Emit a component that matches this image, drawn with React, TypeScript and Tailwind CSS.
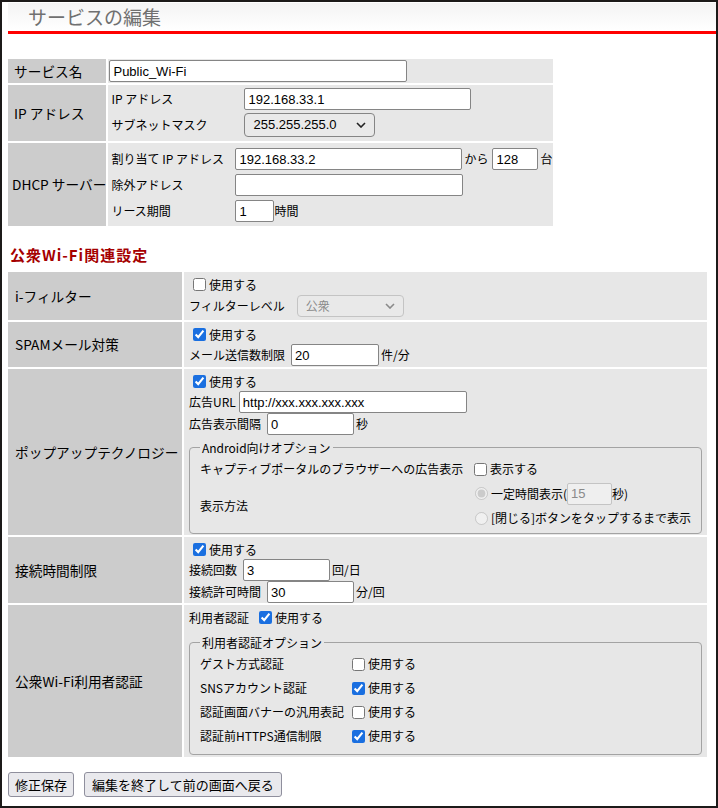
import React from "react";

function TextInput({ value, width, disabled }: { value?: string; width: string; disabled?: boolean }) {
  return (
    <input
      type="text"
      defaultValue={value}
      disabled={disabled}
      className={`${width} h-[22px] rounded-[2px] border px-[3px] font-['Liberation_Sans',sans-serif] text-[13px] outline-none ${
        disabled ? "border-[#c4c4c4] bg-[#efefef] text-[#8a8a8a]" : "border-[#858585] bg-white text-black"
      }`}
    />
  );
}

function Check({ checked, label, disabled }: { checked?: boolean; label: string; disabled?: boolean }) {
  return (
    <label className="flex items-center whitespace-nowrap">
      <input
        type="checkbox"
        defaultChecked={checked}
        disabled={disabled}
        className="ml-[4px] mr-[3px] h-[13px] w-[13px] accent-[#1a6fe0]"
      />
      <span>{label}</span>
    </label>
  );
}

function Chevron({ color }: { color: string }) {
  return (
    <svg width="10" height="6" viewBox="0 0 10 6" className="pointer-events-none absolute right-[9px] top-1/2 -translate-y-1/2">
      <path d="M1 1l4 4 4-4" fill="none" stroke={color} strokeWidth="1.6" />
    </svg>
  );
}

const optionsAndroid = (
  <fieldset className="mt-[4px] rounded-[4px] border border-[#a3a3a3] px-[10px] pb-[3px]">
    <legend className="px-[2px] leading-[17px]">Android向けオプション</legend>
    <div className="grid grid-cols-[270px_1fr] pt-[1px]">
      <div className="flex h-[24px] items-center whitespace-nowrap">キャプティブポータルのブラウザーへの広告表示</div>
      <div className="flex h-[24px] items-center">
        <Check label="表示する" />
      </div>
      <div className="flex items-center">表示方法</div>
      <div className="flex flex-col">
        <label className="flex h-[25px] items-center whitespace-nowrap">
          <input type="radio" name="mode" defaultChecked disabled className="ml-[5px] mr-[3px] h-[13px] w-[13px]" />
          <span>一定時間表示(</span>
          <TextInput value="15" width="w-[45px]" disabled />
          <span>秒)</span>
        </label>
        <label className="flex h-[24px] items-center whitespace-nowrap">
          <input type="radio" name="mode" disabled className="ml-[5px] mr-[3px] h-[13px] w-[13px]" />
          <span>[閉じる]ボタンをタップするまで表示</span>
        </label>
      </div>
    </div>
  </fieldset>
);

const authOptions = [
  { label: "ゲスト方式認証", checked: false },
  { label: "SNSアカウント認証", checked: true },
  { label: "認証画面バナーの汎用表記", checked: false },
  { label: "認証前HTTPS通信制限", checked: true },
];

export default function App() {
  return (
    <div className="h-[808px] w-[718px] overflow-hidden border-2 border-[#1c1a19] bg-white font-['Noto_Sans_CJK_JP','Liberation_Sans',sans-serif] text-[12px] text-black">
      <div className="ml-[6px] mt-[1px] h-[31px] border-b-[3px] border-[#ff0000] bg-gradient-to-b from-[#f4f4f4] to-white pl-[20px]">
        <h1 className="text-[19px] leading-[28px] text-[#707070]">サービスの編集</h1>
      </div>

      <div className="pl-[4px]">
        <table className="mt-[23px] border-separate border-spacing-[2px]">
          <tbody>
            <tr>
              <th className="w-[98px] whitespace-nowrap bg-[#cccccc] pl-[6px] text-left text-[13.7px] font-normal">サービス名</th>
              <td className="w-[445px] bg-[#e7e7e7] p-[1px]">
                <TextInput value="Public_Wi-Fi" width="w-[298px]" />
              </td>
            </tr>
            <tr>
              <th className="whitespace-nowrap bg-[#cccccc] pl-[6px] text-left text-[13.7px] font-normal">IP アドレス</th>
              <td className="bg-[#e7e7e7] py-[2px] pl-[3px]">
                <div className="grid grid-cols-[133px_1fr]">
                  <div className="flex h-[24px] items-center">IP アドレス</div>
                  <div className="flex h-[24px] items-center">
                    <TextInput value="192.168.33.1" width="w-[227px]" />
                  </div>
                  <div className="flex h-[28px] items-center">サブネットマスク</div>
                  <div className="flex h-[28px] items-center">
                    <div className="relative">
                      <select className="h-[24px] w-[131px] appearance-none rounded-[4px] border border-[#858585] bg-[#e9e9e9] pl-[8px] font-['Liberation_Sans',sans-serif] text-[13px] text-black outline-none">
                        <option>255.255.255.0</option>
                      </select>
                      <Chevron color="#222" />
                    </div>
                  </div>
                </div>
              </td>
            </tr>
            <tr>
              <th className="whitespace-nowrap bg-[#cccccc] pl-[4px] text-left text-[13.7px] font-normal">DHCP サーバー</th>
              <td className="bg-[#e7e7e7] pb-[2px] pl-[3px] pt-[3px]">
                <div className="grid grid-cols-[124px_1fr]">
                  <div className="flex h-[26px] items-center whitespace-nowrap">割り当て IP アドレス</div>
                  <div className="flex h-[26px] items-center">
                    <TextInput value="192.168.33.2" width="w-[227px]" />
                    <span className="ml-[2px] mr-[4px]">から</span>
                    <TextInput value="128" width="w-[46px]" />
                    <span className="ml-[2px]">台</span>
                  </div>
                  <div className="flex h-[26px] items-center">除外アドレス</div>
                  <div className="flex h-[26px] items-center">
                    <TextInput width="w-[228px]" />
                  </div>
                  <div className="flex h-[26px] items-center">リース期間</div>
                  <div className="flex h-[26px] items-center">
                    <TextInput value="1" width="w-[39px]" />
                    <span>時間</span>
                  </div>
                </div>
              </td>
            </tr>
          </tbody>
        </table>

        <h2 className="ml-[4px] mt-[16px] text-[15px] font-bold leading-[22px] tracking-[1px] text-[#a50000]">公衆Wi-Fi関連設定</h2>

        <table className="mt-[4px] border-separate border-spacing-[2px]">
          <tbody>
            <tr>
              <th className="w-[174px] whitespace-nowrap bg-[#cccccc] pl-[7px] text-left text-[13.7px] font-normal">i-フィルター</th>
              <td className="w-[522px] bg-[#e7e7e7] px-[5px] pb-[2px] pt-[3px]">
                <div className="flex h-[19px] items-center">
                  <Check label="使用する" />
                </div>
                <div className="flex h-[24px] items-center">
                  <span className="mr-[12px]">フィルターレベル</span>
                  <div className="relative">
                    <select disabled className="h-[22px] w-[107px] appearance-none rounded-[4px] border border-[#c4c4c4] bg-[#e9e9e9] pl-[8px] text-[12px] text-[#8a8a8a] outline-none">
                      <option>公衆</option>
                    </select>
                    <Chevron color="#8a8a8a" />
                  </div>
                </div>
              </td>
            </tr>
            <tr>
              <th className="whitespace-nowrap bg-[#cccccc] pl-[7px] text-left text-[13.7px] font-normal">SPAMメール対策</th>
              <td className="bg-[#e7e7e7] px-[5px] pb-[1px] pt-[3px]">
                <div className="flex h-[19px] items-center">
                  <Check checked label="使用する" />
                </div>
                <div className="flex h-[22px] items-center">
                  <span className="mr-[6px]">メール送信数制限</span>
                  <TextInput value="20" width="w-[88px]" />
                  <span className="ml-[2px]">件/分</span>
                </div>
              </td>
            </tr>
            <tr>
              <th className="whitespace-nowrap bg-[#cccccc] pl-[7px] text-left text-[13.7px] font-normal">ポップアップテクノロジー</th>
              <td className="bg-[#e7e7e7] px-[5px] pb-[1px] pt-[3px]">
                <div className="flex h-[19px] items-center">
                  <Check checked label="使用する" />
                </div>
                <div className="flex h-[22px] items-center">
                  <span className="mr-[3px]">広告URL</span>
                  <TextInput value="http://xxx.xxx.xxx.xxx" width="w-[228px]" />
                </div>
                <div className="flex h-[22px] items-center">
                  <span className="mr-[6px]">広告表示間隔</span>
                  <TextInput value="0" width="w-[87px]" />
                  <span className="ml-[2px]">秒</span>
                </div>
                {optionsAndroid}
              </td>
            </tr>
            <tr>
              <th className="whitespace-nowrap bg-[#cccccc] pl-[7px] text-left text-[13.7px] font-normal">接続時間制限</th>
              <td className="bg-[#e7e7e7] px-[5px] pt-[3px]">
                <div className="flex h-[19px] items-center">
                  <Check checked label="使用する" />
                </div>
                <div className="flex h-[22px] items-center">
                  <span className="mr-[6px]">接続回数</span>
                  <TextInput value="3" width="w-[87px]" />
                  <span className="ml-[2px]">回/日</span>
                </div>
                <div className="flex h-[22px] items-center">
                  <span className="mr-[6px]">接続許可時間</span>
                  <TextInput value="30" width="w-[87px]" />
                  <span className="ml-[2px]">分/回</span>
                </div>
              </td>
            </tr>
            <tr>
              <th className="whitespace-nowrap bg-[#cccccc] pl-[7px] text-left text-[13.7px] font-normal">公衆Wi-Fi利用者認証</th>
              <td className="bg-[#e7e7e7] px-[5px] pb-[2px] pt-[3px]">
                <div className="flex h-[19px] items-center">
                  <span className="mr-[6px]">利用者認証</span>
                  <Check checked label="使用する" />
                </div>
                <fieldset className="mt-[7px] rounded-[4px] border border-[#a3a3a3] px-[10px] pb-[6px]">
                  <legend className="px-[2px] leading-[17px]">利用者認証オプション</legend>
                  <div className="grid grid-cols-[148px_1fr] pt-[1px]">
                    {authOptions.map((o) => (
                      <React.Fragment key={o.label}>
                        <div className="flex h-[24px] items-center whitespace-nowrap">{o.label}</div>
                        <div className="flex h-[24px] items-center">
                          <Check checked={o.checked} label="使用する" />
                        </div>
                      </React.Fragment>
                    ))}
                  </div>
                </fieldset>
              </td>
            </tr>
          </tbody>
        </table>

        <div className="ml-[2px] mt-[13px] flex gap-[10px]">
          <button className="h-[25px] rounded-[3px] border border-[#8f8f9d] bg-[#e9e9ed] px-[6px] text-[13px]">修正保存</button>
          <button className="h-[25px] rounded-[3px] border border-[#8f8f9d] bg-[#e9e9ed] px-[7px] text-[13px]">編集を終了して前の画面へ戻る</button>
        </div>
      </div>
    </div>
  );
}
